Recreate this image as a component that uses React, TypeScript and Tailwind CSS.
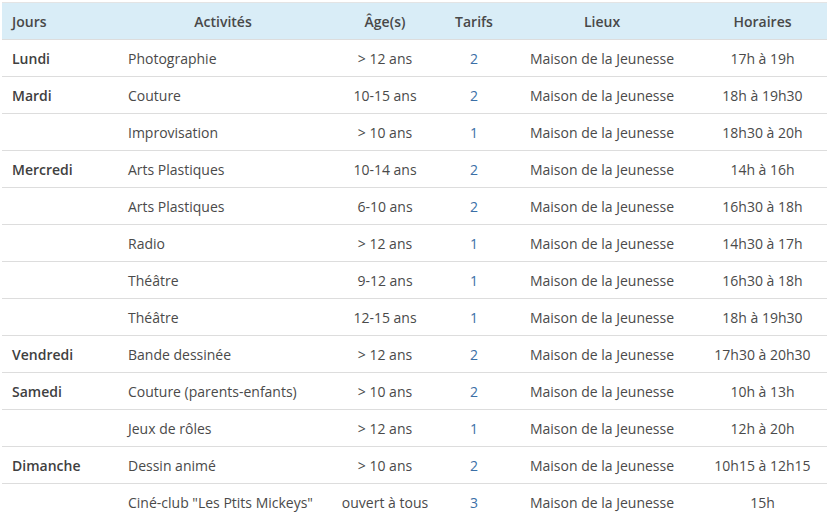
const ROWS: [string, string, string, string, string][] = [
  ["Lundi", "Photographie", "> 12 ans", "2", "17h à 19h"],
  ["Mardi", "Couture", "10-15 ans", "2", "18h à 19h30"],
  ["", "Improvisation", "> 10 ans", "1", "18h30 à 20h"],
  ["Mercredi", "Arts Plastiques", "10-14 ans", "2", "14h à 16h"],
  ["", "Arts Plastiques", "6-10 ans", "2", "16h30 à 18h"],
  ["", "Radio", "> 12 ans", "1", "14h30 à 17h"],
  ["", "Théâtre", "9-12 ans", "1", "16h30 à 18h"],
  ["", "Théâtre", "12-15 ans", "1", "18h à 19h30"],
  ["Vendredi", "Bande dessinée", "> 12 ans", "2", "17h30 à 20h30"],
  ["Samedi", "Couture (parents-enfants)", "> 10 ans", "2", "10h à 13h"],
  ["", "Jeux de rôles", "> 12 ans", "1", "12h à 20h"],
  ["Dimanche", "Dessin animé", "> 10 ans", "2", "10h15 à 12h15"],
  ["", "Ciné-club \"Les Ptits Mickeys\"", "ouvert à tous", "3", "15h"],
]

export default function App() {
  return (
    <div
      className="w-[829px] h-[521px] overflow-hidden bg-white pt-[2px] px-[2px]"
      style={{ fontFamily: '"Open Sans", "Liberation Sans", sans-serif' }}
    >
      <table className="w-[825px] table-fixed border-collapse text-[14px] text-[#4a4a4a]">
        <colgroup>
          <col className="w-[116px]" />
          <col className="w-[210px]" />
          <col className="w-[114px]" />
          <col className="w-[64px]" />
          <col className="w-[192px]" />
          <col className="w-[129px]" />
        </colgroup>
        <thead>
          <tr className="h-[37px] bg-[#d9edf7] border-t border-[#e4e4e4] text-[#484848]">
            <th className="text-left pl-[10px] font-semibold">Jours</th>
            <th className="text-center font-semibold">Activités</th>
            <th className="text-center font-semibold">Âge(s)</th>
            <th className="text-center font-semibold">Tarifs</th>
            <th className="text-center font-semibold">Lieux</th>
            <th className="text-center font-semibold">Horaires</th>
          </tr>
        </thead>
        <tbody>
          {ROWS.map((r, i) => (
            <tr key={i} className="h-[37px] border-t border-[#dddddd]">
              <td className="pl-[10px] font-semibold text-[#404040]">{r[0]}</td>
              <td className="pl-[10px] whitespace-nowrap">{r[1]}</td>
              <td className="text-center whitespace-nowrap">{r[2]}</td>
              <td className="text-center text-[#3b6fa6]">{r[3]}</td>
              <td className="text-center whitespace-nowrap">Maison de la Jeunesse</td>
              <td className="text-center whitespace-nowrap">{r[4]}</td>
            </tr>
          ))}
        </tbody>
      </table>
    </div>
  )
}
